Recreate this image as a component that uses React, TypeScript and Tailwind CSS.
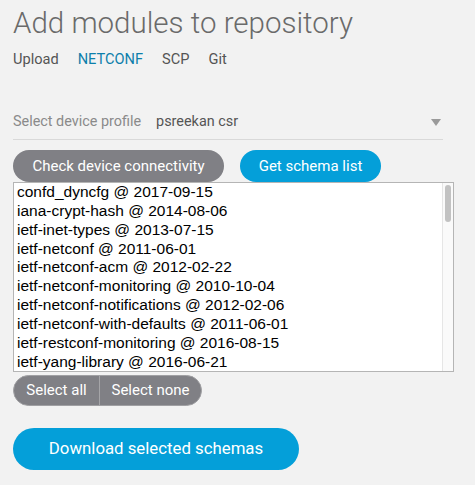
import { useState } from 'react';

const schemas = [
  'confd_dyncfg @ 2017-09-15',
  'iana-crypt-hash @ 2014-08-06',
  'ietf-inet-types @ 2013-07-15',
  'ietf-netconf @ 2011-06-01',
  'ietf-netconf-acm @ 2012-02-22',
  'ietf-netconf-monitoring @ 2010-10-04',
  'ietf-netconf-notifications @ 2012-02-06',
  'ietf-netconf-with-defaults @ 2011-06-01',
  'ietf-restconf-monitoring @ 2016-08-15',
  'ietf-yang-library @ 2016-06-21',
];

const tabs = ['Upload', 'NETCONF', 'SCP', 'Git'];

export default function App() {
  const [tab, setTab] = useState('NETCONF');

  return (
    <div className="w-[475px] h-[485px] bg-[#f2f2f2] px-[13px] pt-[5px] font-['Roboto','Liberation_Sans',sans-serif] overflow-hidden">
      <h1 className="text-[29.5px] font-light leading-[36px] text-[#6a6a6a]">
        Add modules to repository
      </h1>

      <div className="flex gap-[19px] mt-[8px] text-[14.6px] leading-[20px]">
        {tabs.map((t) => (
          <button
            key={t}
            onClick={() => setTab(t)}
            className={t === tab ? 'text-[#0d7fab]' : 'text-[#555]'}
          >
            {t}
          </button>
        ))}
      </div>

      <div className="mt-[43px] w-[430px] flex items-center border-b border-[#d9d9d9] pb-[7px] text-[14.4px] leading-[20px]">
        <span className="text-[#8a8a8a]">Select device profile</span>
        <span className="ml-[15px] text-[#555]">psreekan csr</span>
        <svg className="ml-auto mr-[2px]" width="10" height="7" viewBox="0 0 10 7">
          <path d="M0 0 H10 L5 7 Z" fill="#9a9a9a" />
        </svg>
      </div>

      <div className="flex gap-4 mt-[10px] text-[15px]">
        <button className="h-[32px] w-[211px] rounded-full bg-[#808085] text-white">
          Check device connectivity
        </button>
        <button className="h-[32px] w-[141px] rounded-full bg-[#049fd9] text-white">
          Get schema list
        </button>
      </div>

      <div className="w-[441px] h-[190px] bg-white border border-[#b5b5b5] flex font-['Liberation_Sans',sans-serif] text-[15.5px] text-black">
        <div className="flex-1 overflow-hidden pl-[3px]">
          {schemas.map((s) => (
            <div key={s} className="h-[18.85px] leading-[18.85px] whitespace-nowrap">
              {s}
            </div>
          ))}
        </div>
        <div className="w-[11px] border-l border-[#e6e6e6] bg-[#fafafa] pt-[2px] flex justify-center">
          <div className="w-[6px] h-[37px] rounded-full bg-[#c2c2c2]" />
        </div>
      </div>

      <div className="mt-[3px] flex w-[189px] h-[31px] rounded-full bg-[#808085] border border-[#a0a0a3] text-white text-[15px] leading-[29px] overflow-hidden">
        <button className="w-[86px] border-r border-[#a5a5a8]">Select all</button>
        <button className="flex-1">Select none</button>
      </div>

      <div className="mt-[22px]">
        <button className="h-[42px] w-[286px] rounded-full bg-[#049fd9] text-white text-[16.8px]">
          Download selected schemas
        </button>
      </div>
    </div>
  );
}
